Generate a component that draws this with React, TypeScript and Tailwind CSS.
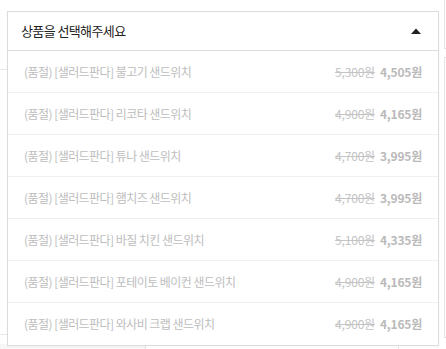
import React from "react";

const items = [
  { name: "(품절) [샐러드판다] 불고기 샌드위치", orig: "5,300원", price: "4,505원" },
  { name: "(품절) [샐러드판다] 리코타 샌드위치", orig: "4,900원", price: "4,165원" },
  { name: "(품절) [샐러드판다] 튜나 샌드위치", orig: "4,700원", price: "3,995원" },
  { name: "(품절) [샐러드판다] 햄치즈 샌드위치", orig: "4,700원", price: "3,995원" },
  { name: "(품절) [샐러드판다] 바질 치킨 샌드위치", orig: "5,100원", price: "4,335원" },
  { name: "(품절) [샐러드판다] 포테이토 베이컨 샌드위치", orig: "4,900원", price: "4,165원" },
  { name: "(품절) [샐러드판다] 와사비 크랩 샌드위치", orig: "4,900원", price: "4,165원" },
];

function Background() {
  return (
    <div className="flex h-[349px] w-[446px]">
      <div className="flex w-[7px] flex-col">
        <div className="mt-[69px] h-[266px] border-y border-[#e6e6e6]" />
        <div className="mt-[9px] flex-1 bg-[#f7f7f7]" />
      </div>
      <div className="flex flex-1 flex-col">
        <div className="flex-1" />
        <div className="flex h-[5px]">
          <div className="w-[138px] bg-[#f7f7f7]" />
          <div className="w-[253px] border-l border-[#e6e6e6]" />
          <div className="flex-1 border-l border-[#e6e6e6]" />
        </div>
      </div>
      <div className="flex w-[2px] flex-col">
        <div className="h-[49px] border-l border-b border-[#e3e3e3]" />
        <div className="mt-[8px] h-[281px] border-l border-y border-[#e3e3e3]" />
      </div>
    </div>
  );
}

export default function App() {
  return (
    <div
      className="relative h-[349px] w-[446px] overflow-hidden bg-white"
      style={{ fontFamily: '"Noto Sans CJK KR", "Noto Sans", sans-serif' }}
    >
      <Background />

      {/* open select menu overlaying the page */}
      <div className="absolute left-[7px] top-[11px] w-[432px] border border-[#dcdcdc] bg-white shadow-[0_1px_2px_rgba(0,0,0,0.04)]">
        <div className="flex h-[39px] items-center justify-between border-b border-[#dcdcdc] pl-[13px] pr-[16px]">
          <span className="text-[13px] tracking-[-0.6px] text-[#222]">상품을 선택해주세요</span>
          <svg width="10" height="6" viewBox="0 0 10 6" className="mr-[1px]">
            <polygon points="0,6 10,6 5,0.5" fill="#222" />
          </svg>
        </div>
        {items.map((it, i) => (
          <div
            key={i}
            className={`flex h-[42px] items-center justify-between pl-[16px] pr-[16px] text-[12px] ${
              i < items.length - 1 ? "border-b border-[#f0f0f0]" : ""
            }`}
          >
            <span className="tracking-[-0.55px] text-[#bdbdbd]">{it.name}</span>
            <span className="flex items-center gap-[5px] tracking-[-0.2px]">
              <span className="text-[#c4c4c4] line-through">{it.orig}</span>
              <span className="font-bold text-[#bababa]">{it.price}</span>
            </span>
          </div>
        ))}
      </div>
    </div>
  );
}
